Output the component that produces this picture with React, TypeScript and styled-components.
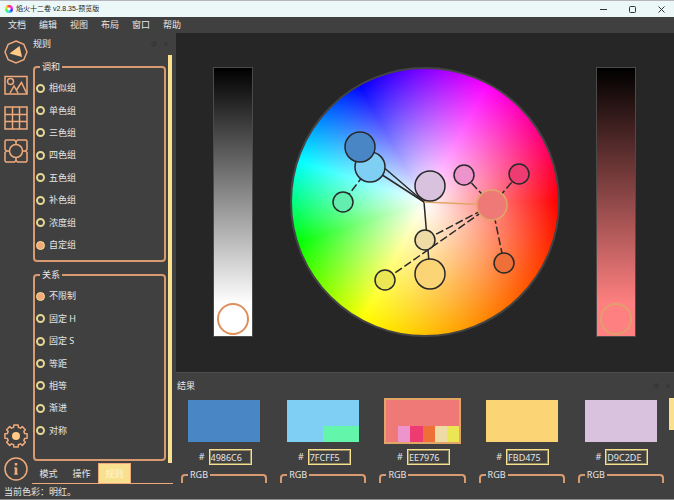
import React, { useState } from "react";
import styled, { createGlobalStyle } from "styled-components";

const accent = "#f0a97b";
const line = "#d89a70";
const cream = "#f8e08e";
const panel = "#404040";
const text = "#e6e6e6";

const GlobalStyle = createGlobalStyle`
  *, *::before, *::after { box-sizing: border-box; }
  html, body, #root { height: 100%; }
  body {
    margin: 0;
    overflow: hidden;
    background: ${panel};
    color: ${text};
    font: 9px/12px "Noto Sans", "Noto Sans CJK SC", sans-serif;
  }
  button, input { font: inherit; color: inherit; }
`;

const Window = styled.div`
  display: flex;
  flex-direction: column;
  height: 100%;
  background: ${panel};
  border-top: 1px solid #b5b5bb;
  border-bottom: 1px solid #8c8c8c;
`;

const TitleBar = styled.header`
  display: flex;
  align-items: center;
  height: 16px;
  flex: none;
  padding-left: 5px;
  gap: 3px;
  background: #ebf8f7;
  color: #222;
`;

const Logo = styled.span`
  width: 8px;
  height: 8px;
  border-radius: 50%;
  background: radial-gradient(circle, #fff 0 1px, transparent 2px),
    conic-gradient(#f33, #f3f, #33f, #3df, #3f5, #ee3, #f33);
`;

const WindowTitle = styled.h1`
  margin: 0;
  flex: 1;
  font: 7px/16px "Liberation Sans", "Noto Sans CJK SC", sans-serif;
`;

const WindowButton = styled.button`
  display: grid;
  place-items: center;
  width: 26px;
  height: 16px;
  padding: 0;
  border: 0;
  background: none;
  color: #333;
`;

const MenuBar = styled.nav`
  display: flex;
  align-items: center;
  height: 16px;
  flex: none;
  padding-left: 8px;
  gap: 13px;
`;

const MenuButton = styled.button`
  padding: 0;
  border: 0;
  background: none;
  line-height: 16px;
`;

const Body = styled.div`
  display: flex;
  flex: 1;
  min-height: 0;
`;

const Rail = styled.aside`
  display: flex;
  flex-direction: column;
  align-items: center;
  flex: none;
  width: 32px;
  padding: 7px 0 3px;
  gap: 9px;
`;

const RailButton = styled.button`
  width: 24px;
  height: 24px;
  padding: 0;
  border: 0;
  background: none;
  color: ${accent};
  svg { display: block; }
`;

const Spacer = styled.span`
  flex: 1;
`;

const RulesPanel = styled.section`
  display: flex;
  flex-direction: column;
  flex: none;
  width: 144px;
`;

const PanelHeader = styled.div<{ $height: number; $end: number }>`
  display: flex;
  align-items: center;
  flex: none;
  height: ${(p) => p.$height}px;
  padding: 0 ${(p) => p.$end}px 0 1px;
  gap: 6px;
`;

const PanelTitle = styled.h2`
  margin: 0;
  flex: 1;
  font-size: 9px;
  font-weight: 400;
`;

const DockButton = styled.button`
  padding: 0;
  border: 0;
  background: none;
  color: #343434;
  line-height: 0;
`;

const RulesScroll = styled.div`
  display: flex;
  flex: 1;
  min-height: 0;
  gap: 2px;
`;

const RulesList = styled.div`
  display: flex;
  flex-direction: column;
  flex: 1;
  padding: 6px 0 2px 1px;
  gap: 7px;
`;

const ScrollThumb = styled.div`
  flex: none;
  width: 4px;
  margin-right: 4px;
  background: ${cream};
`;

const RuleGroup = styled.fieldset<{ $rows: number; $bottom: number }>`
  display: flex;
  flex: ${(p) => p.$rows} 0 auto;
  min-width: 0;
  margin: 0;
  padding: 4px 1px ${(p) => p.$bottom}px;
  border: 2px solid ${line};
  border-radius: 4px;
`;

const Legend = styled.legend<{ $indent: number }>`
  margin-left: ${(p) => p.$indent}px;
  padding: 0 2px;
`;

const RuleOptions = styled.div`
  display: grid;
  flex: 1;
  grid-auto-rows: minmax(22px, 1fr);
`;

const RuleLabel = styled.label`
  display: flex;
  align-items: center;
  gap: 4px;
`;

const Radio = styled.input`
  appearance: none;
  width: 9px;
  height: 9px;
  margin: 0;
  border: 2px solid #e6d892;
  border-radius: 50%;
  &:checked {
    background: ${accent};
    border: 1px solid ${cream};
  }
`;

const Tabs = styled.div`
  display: flex;
  flex: none;
  height: 21px;
  margin-right: 3px;
  border-bottom: 1px solid ${accent};
`;

const Tab = styled.button<{ $active: boolean }>`
  width: 33px;
  padding: 0;
  border: 1px solid ${(p) => (p.$active ? accent : "transparent")};
  border-bottom: 0;
  background: ${(p) => (p.$active ? cream : "none")};
  color: ${(p) => (p.$active ? "#fff6d2" : text)};
`;

const Workspace = styled.main`
  display: flex;
  flex-direction: column;
  flex: 1;
  min-width: 0;
`;

const Stage = styled.section`
  display: flex;
  justify-content: space-between;
  flex: 1;
  min-height: 0;
  padding: 34px 38px 35px 37px;
  background: #262626;
`;

const ValueBar = styled.div<{ $end: string }>`
  display: flex;
  align-items: flex-end;
  justify-content: center;
  width: 40px;
  padding-bottom: 1px;
  border: 1px solid #4a4a4a;
  background: linear-gradient(#000, ${(p) => p.$end} 88%);
`;

const ValueHandle = styled.button<{ $color: string }>`
  width: 32px;
  height: 32px;
  padding: 0;
  border: 2px solid ${(p) => p.$color};
  border-radius: 50%;
  background: none;
`;

const Wheel = styled.div`
  height: 100%;
  aspect-ratio: 1;
  border: 2px solid #444;
  border-radius: 50%;
  background: radial-gradient(closest-side, #fff, rgba(255, 255, 255, 0)),
    conic-gradient(
      from 90deg,
      #f00 0deg,
      #ff8000 60deg,
      #ff0 118deg,
      #0f0 162deg,
      #0ff 198deg,
      #00f 241deg,
      #f0f 298deg,
      #f00 360deg
    );
  svg { display: block; width: 100%; height: 100%; }
`;

const Results = styled.section`
  flex: none;
  height: 112px;
  border-top: 1px solid #4c4c4c;
`;

const ResultScroll = styled.div`
  display: flex;
  align-items: flex-start;
  gap: 5px;
  padding-left: 5px;
`;

const Cards = styled.div`
  display: grid;
  grid-template-columns: repeat(5, 1fr);
  flex: 1;
  gap: 13px;
`;

const ResultThumb = styled.div`
  width: 5px;
  height: 32px;
  background: ${cream};
`;

const Card = styled.article`
  display: flex;
  flex-direction: column;
`;

const Swatch = styled.div<{ $color: string; $selected: boolean }>`
  display: flex;
  align-items: flex-end;
  justify-content: flex-end;
  height: 46px;
  margin: 0 5px;
  border: 2px solid ${(p) => (p.$selected ? "#e2a568" : "transparent")};
  background: ${(p) => p.$color} padding-box;
`;

const SubSwatch = styled.span<{ $color: string; $of: number }>`
  width: calc(100% / ${(p) => p.$of});
  height: 16px;
  background: ${(p) => p.$color};
`;

const HexLabel = styled.label`
  display: flex;
  align-items: center;
  justify-content: center;
  gap: 4px;
  margin: 5px 0 4px;
  padding-left: 2px;
`;

const HexInput = styled.input`
  width: 43px;
  height: 16px;
  padding: 0 1px;
  border: 1px solid ${cream};
  outline: 1px solid #968c62;
  outline-offset: -2px;
  background: ${panel};
  border-radius: 0;
`;

const RgbGroup = styled.fieldset`
  min-width: 0;
  height: 14px;
  margin: 0;
  padding: 0;
  border: 2px solid ${line};
  border-bottom: 0;
  border-radius: 4px 4px 0 0;
`;

const StatusBar = styled.footer`
  flex: none;
  height: 15px;
  padding-left: 4px;
  line-height: 15px;
`;

const PinIcon = () => (
  <svg width="6" height="6" viewBox="0 0 6 6" fill="none" stroke="currentColor">
    <path d="M1 5V2h3v3zM2 1h3v3" />
  </svg>
);

const CloseIcon = () => (
  <svg width="6" height="6" viewBox="0 0 6 6" fill="none" stroke="currentColor">
    <path d="M1 1l4 4M5 1L1 5" />
  </svg>
);

const Icon = ({ children }: { children: React.ReactNode }) => (
  <svg width="24" height="24" viewBox="0 0 24 24" fill="none" stroke="currentColor" strokeWidth="1.5">
    {children}
  </svg>
);

const gearPath = (() => {
  const points: string[] = [];
  for (let i = 0; i < 8; i++) {
    const base = (i * Math.PI) / 4;
    [[-0.27, 9], [-0.19, 11.3], [0.19, 11.3], [0.27, 9]].forEach(([a, r]) => {
      points.push(`${(12 + r * Math.sin(base + a)).toFixed(2)} ${(12 - r * Math.cos(base + a)).toFixed(2)}`);
    });
  }
  return `M${points.join("L")}Z`;
})();

const tools = [
  {
    name: "色轮",
    art: (
      <>
        <path d="M12 1l7.8 3.2L23 12l-3.2 7.8L12 23l-7.8-3.2L1 12l3.2-7.8z" />
        <path d="M5.5 13.5L15.5 6l2.5 11z" fill="#ffc887" stroke="none" />
      </>
    ),
  },
  {
    name: "图像",
    art: (
      <>
        <path d="M1 3.5h22v17.5H1z" />
        <circle cx="6.5" cy="8.5" r="3" />
        <path d="M6 20l4-7 4 7M12.5 17L17.5 9.5l5 10.5" />
      </>
    ),
  },
  { name: "色板", art: <path d="M1 1h22v22H1zM8.5 1v22M15.5 1v22M1 8.5h22M1 15.5h22" /> },
  {
    name: "色库",
    art: (
      <>
        <path d="M2 1h8.500L12 2.500 13.500 1H22l1 1v8.500L21.500 12l1.500 1.500V22l-1 1h-8.500L12 21.500 10.500 23H2l-1-1v-8.500L2.500 12 1 10.500V2z" />
        <circle cx="12" cy="12" r="6.5" />
        <path d="M12 2v4M12 18v4M2 12h4M18 12h4" />
      </>
    ),
  },
];

type Node = { x: number; y: number; r: number; fill: string; active?: boolean };

const links = [
  [-65, -55],
  [-55, -35],
  [5, -16],
  [5, 72],
];

const dashed = [
  [-55, -35, -82, 0],
  [67, 3, 39, -27],
  [67, 3, 94, -28],
  [67, 3, 79, 61],
  [67, 3, 0, 38],
  [67, 3, -40, 78],
];

const nodes: Node[] = [
  { x: -82, y: 0, r: 10, fill: "#63eeb0" },
  { x: -55, y: -35, r: 15, fill: "#7fcff5" },
  { x: -65, y: -55, r: 15, fill: "#4986c6" },
  { x: 5, y: -16, r: 15, fill: "#d9c2de" },
  { x: 39, y: -27, r: 10, fill: "#ec94cb" },
  { x: 94, y: -28, r: 10, fill: "#ee3c72" },
  { x: 79, y: 61, r: 10, fill: "#ee7038" },
  { x: 5, y: 72, r: 15, fill: "#fbd475" },
  { x: 0, y: 38, r: 10, fill: "#efdba6" },
  { x: -40, y: 78, r: 10, fill: "#ebe653" },
  { x: 67, y: 3, r: 15, fill: "#ee7976", active: true },
];

const groups = [
  {
    title: "调和",
    name: "harmony",
    bottom: 4,
    initial: "自定组",
    options: ["相似组", "单色组", "三色组", "四色组", "五色组", "补色组", "浓度组", "自定组"],
  },
  {
    title: "关系",
    name: "relation",
    bottom: 17,
    initial: "不限制",
    options: ["不限制", "固定 H", "固定 S", "等距", "相等", "渐进", "对称"],
  },
];

const colors = [
  { hex: "4986C6", subs: [] },
  { hex: "7FCFF5", subs: ["#63f5a9"] },
  { hex: "EE7976", subs: ["#ec94cb", "#ee3c72", "#ee7038", "#efdba6", "#ebe653"] },
  { hex: "FBD475", subs: [] },
  { hex: "D9C2DE", subs: [] },
];

export default function App() {
  const [tab, setTab] = useState("规则");
  const [selected, setSelected] = useState("EE7976");

  return (
    <>
      <GlobalStyle />
      <Window lang="zh-CN">
        <TitleBar>
          <Logo />
          <WindowTitle>焰火十二卷 v2.8.35-预览版</WindowTitle>
          <WindowButton aria-label="最小化">
            <svg width="7" height="7" viewBox="0 0 7 7" stroke="currentColor"><path d="M0 3.5h7" /></svg>
          </WindowButton>
          <WindowButton aria-label="最大化">
            <svg width="7" height="7" viewBox="0 0 7 7" fill="none" stroke="currentColor">
              <rect x=".5" y=".5" width="6" height="6" rx="1" />
            </svg>
          </WindowButton>
          <WindowButton aria-label="关闭">
            <svg width="7" height="7" viewBox="0 0 7 7" stroke="currentColor"><path d="M.5.5l6 6M6.5.5l-6 6" /></svg>
          </WindowButton>
        </TitleBar>
        <MenuBar>
          {["文档", "编辑", "视图", "布局", "窗口", "帮助"].map((m) => (
            <MenuButton key={m}>{m}</MenuButton>
          ))}
        </MenuBar>
        <Body>
          <Rail>
            {tools.map((t) => (
              <RailButton key={t.name} aria-label={t.name}><Icon>{t.art}</Icon></RailButton>
            ))}
            <Spacer />
            <RailButton aria-label="设置">
              <Icon>
                <path d={gearPath} strokeLinejoin="round" />
                <circle cx="12" cy="12" r="4" fill="#ffc887" stroke="none" />
              </Icon>
            </RailButton>
            <RailButton aria-label="关于">
              <Icon>
                <circle cx="12" cy="12" r="11" />
                <path d="M12 10.5v7M12 6v2.5" strokeWidth="2.5" />
                <path d="M10 11h2M10 17h4" strokeWidth="1" />
              </Icon>
            </RailButton>
          </Rail>
          <RulesPanel>
            <PanelHeader $height={22} $end={7}>
              <PanelTitle>规则</PanelTitle>
              <DockButton aria-label="浮动规则"><PinIcon /></DockButton>
              <DockButton aria-label="关闭规则"><CloseIcon /></DockButton>
            </PanelHeader>
            <RulesScroll>
              <RulesList>
                {groups.map((g) => (
                  <RuleGroup key={g.name} $rows={g.options.length} $bottom={g.bottom}>
                    <Legend $indent={4}>{g.title}</Legend>
                    <RuleOptions>
                      {g.options.map((o) => (
                        <RuleLabel key={o}>
                          <Radio type="radio" name={g.name} defaultChecked={o === g.initial} />
                          {o}
                        </RuleLabel>
                      ))}
                    </RuleOptions>
                  </RuleGroup>
                ))}
              </RulesList>
              <ScrollThumb />
            </RulesScroll>
            <Tabs role="tablist">
              {["模式", "操作", "规则"].map((t) => (
                <Tab key={t} role="tab" aria-selected={t === tab} $active={t === tab} onClick={() => setTab(t)}>
                  {t}
                </Tab>
              ))}
            </Tabs>
          </RulesPanel>
          <Workspace>
            <Stage>
              <ValueBar $end="#fff"><ValueHandle $color="#dd8f5c" aria-label="明度" /></ValueBar>
              <Wheel>
                <svg viewBox="-133 -133 266 266" fill="none" stroke="#292929" strokeWidth="1.5">
                  {links.map(([x, y]) => (
                    <path key={`${x},${y}`} d={`M-1 0L${x} ${y}`} />
                  ))}
                  <path d="M-1 0L67 3" stroke="#e2a568" />
                  {dashed.map(([a, b, c, d]) => (
                    <path key={`${c},${d}`} d={`M${a} ${b}L${c} ${d}`} strokeDasharray="8 3" />
                  ))}
                  {nodes.map((n) => (
                    <circle
                      key={n.fill}
                      cx={n.x}
                      cy={n.y}
                      r={n.r}
                      fill={n.fill}
                      stroke={n.active ? "#e2a568" : "#292929"}
                    />
                  ))}
                </svg>
              </Wheel>
              <ValueBar $end="#ff8080"><ValueHandle $color="#dfa06c" aria-label="当前色明度" /></ValueBar>
            </Stage>
            <Results>
              <PanelHeader $height={25} $end={3}>
                <PanelTitle>结果</PanelTitle>
                <DockButton aria-label="浮动结果"><PinIcon /></DockButton>
                <DockButton aria-label="关闭结果"><CloseIcon /></DockButton>
              </PanelHeader>
              <ResultScroll>
                <Cards>
                  {colors.map((c) => (
                    <Card key={c.hex}>
                      <Swatch
                        $color={`#${c.hex}`}
                        $selected={c.hex === selected}
                        onClick={() => setSelected(c.hex)}
                      >
                        {c.subs.map((s) => (
                          <SubSwatch key={s} $color={s} $of={c.subs.length + 1} />
                        ))}
                      </Swatch>
                      <HexLabel>
                        #
                        <HexInput defaultValue={c.hex} />
                      </HexLabel>
                      <RgbGroup><Legend $indent={5}>RGB</Legend></RgbGroup>
                    </Card>
                  ))}
                </Cards>
                <ResultThumb />
              </ResultScroll>
            </Results>
          </Workspace>
        </Body>
        <StatusBar>当前色彩：明红。</StatusBar>
      </Window>
    </>
  );
}
